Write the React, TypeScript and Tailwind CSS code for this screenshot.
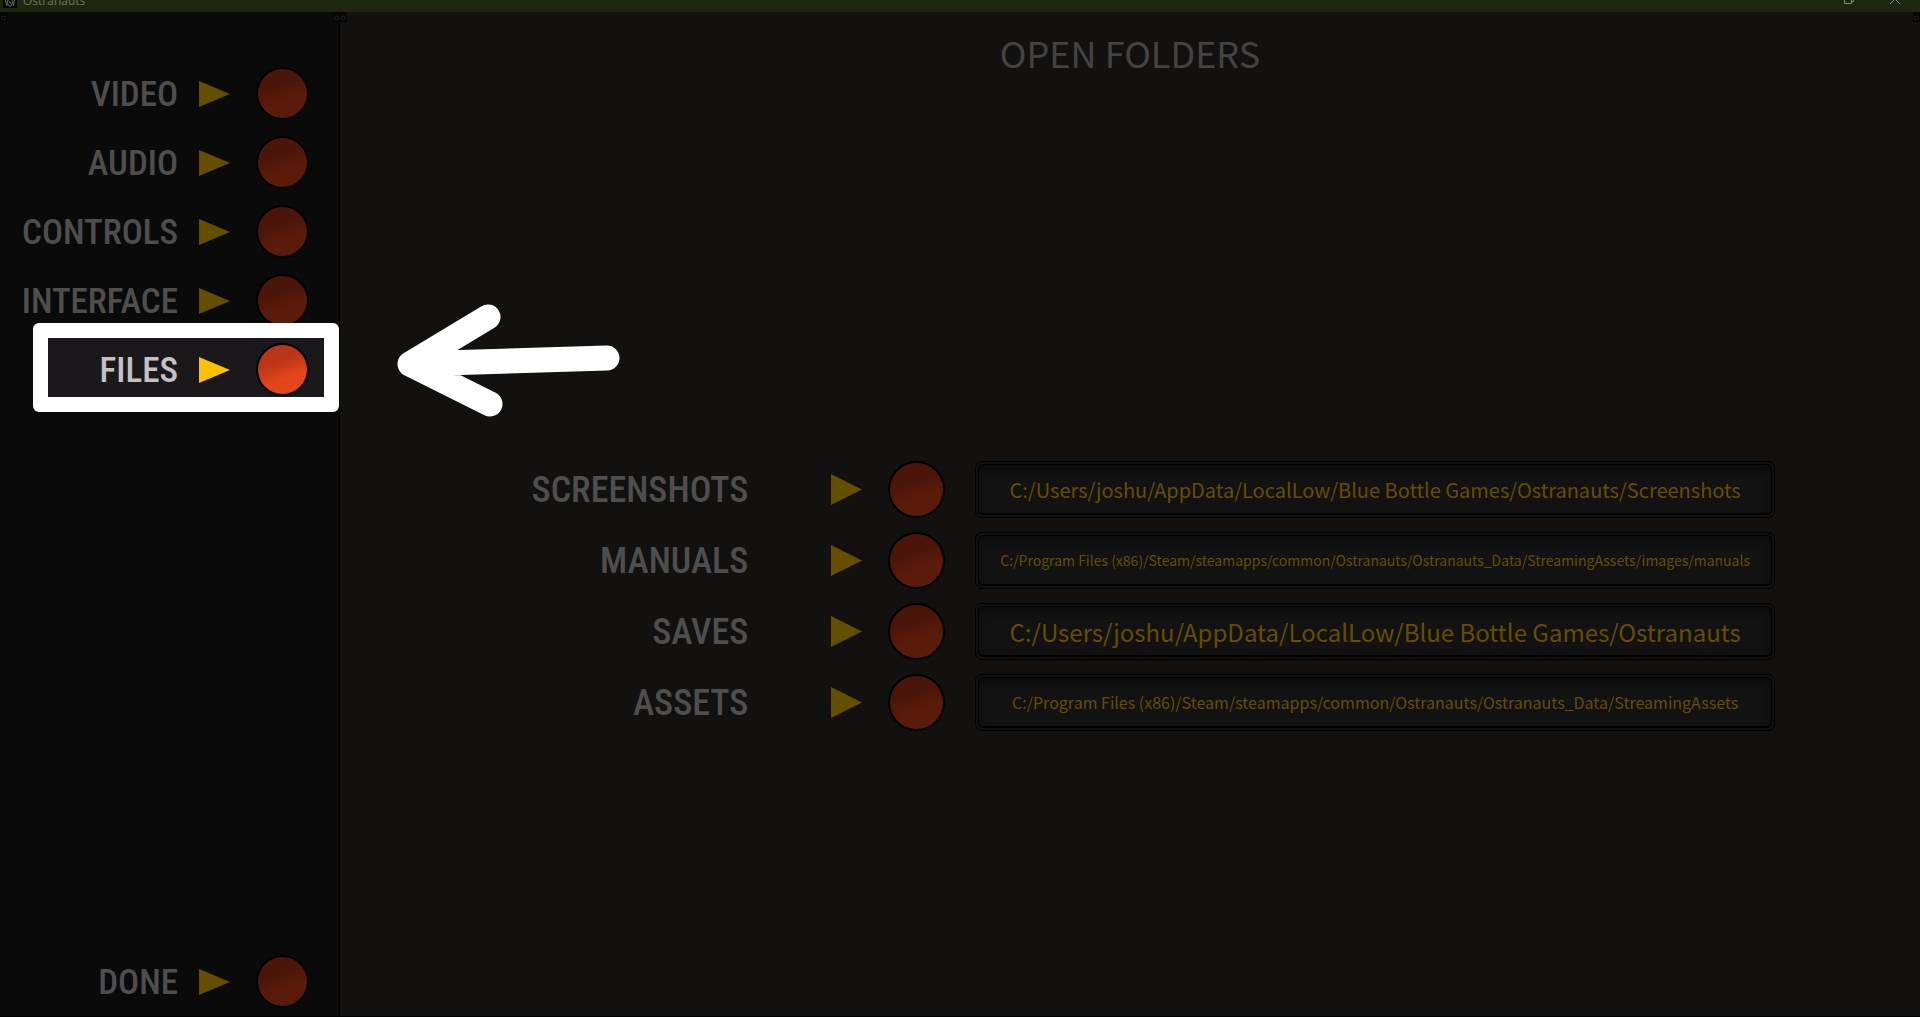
import React from 'react';

interface Folder {
  id: string;
  label: string;
  path: string;
  size: string;
}

const sections = ['VIDEO', 'AUDIO', 'CONTROLS', 'INTERFACE', 'FILES'];

const folders: Folder[] = [
  {
    id: 'screenshots',
    label: 'SCREENSHOTS',
    path: 'C:/Users/joshu/AppData/LocalLow/Blue Bottle Games/Ostranauts/Screenshots',
    size: 'text-[20px]',
  },
  {
    id: 'manuals',
    label: 'MANUALS',
    path: 'C:/Program Files (x86)/Steam/steamapps/common/Ostranauts/Ostranauts_Data/StreamingAssets/images/manuals',
    size: 'text-[14px]',
  },
  {
    id: 'saves',
    label: 'SAVES',
    path: 'C:/Users/joshu/AppData/LocalLow/Blue Bottle Games/Ostranauts',
    size: 'text-[24px]',
  },
  {
    id: 'assets',
    label: 'ASSETS',
    path: 'C:/Program Files (x86)/Steam/steamapps/common/Ostranauts/Ostranauts_Data/StreamingAssets',
    size: 'text-[16px]',
  },
];

const labelFont = "font-['Roboto_Condensed','Liberation_Sans_Narrow','Roboto',sans-serif] font-medium leading-none";
const bodyFont = "font-['Noto_Sans_CJK_SC',sans-serif]";

const Pointer = ({ className }: { className: string }) => (
  <svg viewBox="0 0 31 26" preserveAspectRatio="none" className={`shrink-0 ${className}`} aria-hidden="true">
    <path d="M0 0L31 13L0 26Z" fill="currentColor" />
  </svg>
);

const Screw = ({ className }: { className: string }) => (
  <svg viewBox="0 0 7 10" className={`absolute w-[7px] h-[10px] bg-[#050505] ${className}`} aria-hidden="true">
    <circle cx="3.5" cy="6" r="2" fill="none" stroke="#222" />
  </svg>
);

const TitleBar = () => (
  <header className="flex h-3 items-end overflow-hidden bg-[#1e270d]">
    <div className="flex h-[22px] w-full shrink-0 items-center pl-[3px] pr-5">
      <svg viewBox="0 0 14 14" className="w-[14px] h-[14px]" aria-hidden="true">
        <rect width="14" height="14" fill="#050505" />
        <path d="M2 5L4 12M12 5L10 12M5 6C4 9 5 12 7 12S10 9 9 6M6 7L8 10" fill="none" stroke="#777" />
      </svg>
      <span className="ml-[6px] font-['Open_Sans','Noto_Sans',sans-serif] text-xs leading-none text-[#6f7368]">Ostranauts</span>
      <button className="ml-auto pb-1" aria-label="Restore">
        <svg viewBox="0 0 10 10" className="w-[10px] h-[10px]" fill="none" stroke="#858875">
          <path d="M0.5 2.5H7.5V9.5H0.5ZM2.5 2.5V0.5H9.5V7.5H7.5" />
        </svg>
      </button>
      <button className="ml-9 pb-1" aria-label="Close">
        <svg viewBox="0 0 10 10" className="w-[10px] h-[10px]" fill="none" stroke="#858875">
          <path d="M0 0L10 10M10 0L0 10" />
        </svg>
      </button>
    </div>
  </header>
);

const SideButton = ({ label, active = false }: { label: string; active?: boolean }) => (
  <button className="relative flex h-[69px] w-full items-center text-left" aria-current={active ? 'page' : undefined}>
    {active && (
      <span className="absolute -top-3 -bottom-2 left-[33px] right-0 rounded-[6px] border-[15px] border-white bg-[#1a181a]" />
    )}
    <span className={`relative w-[178px] pt-[2px] text-right text-[35px] ${labelFont} ${active ? 'text-[#c4c2c4]' : 'text-[#4e4e4e]'}`}>{label}</span>
    <Pointer className={`relative ml-[21px] w-[31px] h-[26px] ${active ? 'text-[#ffc200]' : 'text-[#664e00]'}`} />
    <span
      className={`relative ml-[26px] h-[53px] w-[53px] shrink-0 rounded-full border-2 border-black ${
        active ? 'bg-linear-160 from-[#bb3617] from-35% to-[#e3451c] to-65%' : 'bg-linear-160 from-[#4b1509] from-35% to-[#5b1b0b] to-65%'
      }`}
    />
  </button>
);

const FolderRow = ({ folder }: { folder: Folder }) => (
  <div className="flex h-[71px] items-center">
    <label htmlFor={folder.id} className={`min-w-0 flex-[410] text-right text-[36px] text-[#4e4e4e] ${labelFont}`}>
      {folder.label}
    </label>
    <Pointer className="ml-[83px] w-[31px] h-[31px] text-[#664e00]" />
    <button
      aria-label={`Open ${folder.label}`}
      className="ml-[26px] h-[57px] w-[57px] shrink-0 rounded-full border-2 border-black bg-linear-160 from-[#4b1509] from-35% to-[#5b1b0b] to-65%"
    />
    <div className="ml-[30px] h-[57px] min-w-0 flex-[797] rounded-[7px] border border-black p-[2px]">
      <input
        id={folder.id}
        readOnly
        value={folder.path}
        className={`h-full w-full rounded-[5px] border border-b-2 border-black bg-[#121212] text-center text-[#664e00] shadow-[inset_0_5px_6px_#0c0c0c] outline-none ${bodyFont} ${folder.size}`}
      />
    </div>
  </div>
);

const App: React.FC = () => {
  return (
    <div className="flex min-h-screen flex-col bg-[#12110f]">
      <TitleBar />
      <div className="relative flex flex-1 border-b border-black">
        <nav className="flex w-[340px] shrink-0 flex-col justify-between border-r border-black bg-[#0a0a0a] pt-[47px]">
          <div>
            {sections.map((name) => (
              <SideButton key={name} label={name} active={name === 'FILES'} />
            ))}
          </div>
          <SideButton label="DONE" />
        </nav>

        <main className="flex min-w-0 flex-1 flex-col">
          <h1 className={`pt-[14px] text-center text-[36px] leading-[52px] text-[#434343] ${bodyFont}`}>OPEN FOLDERS</h1>
          <div className="mt-[376px] pr-[145px]">
            {folders.map((folder) => (
              <FolderRow key={folder.id} folder={folder} />
            ))}
          </div>
        </main>

        <Screw className="left-0 top-0" />
        <Screw className="left-[333px] top-0" />
        <Screw className="left-[340px] top-0" />
        <Screw className="right-0 top-0" />

        <svg viewBox="0 0 224 114" className="absolute left-[397px] top-[292px] h-[114px] w-[224px]" aria-hidden="true">
          <path d="M91 13L13 60L210 54M93 100L13 60" fill="none" stroke="#fff" strokeWidth="25" strokeLinecap="round" strokeLinejoin="round" />
        </svg>
      </div>
    </div>
  );
};

export default App;
